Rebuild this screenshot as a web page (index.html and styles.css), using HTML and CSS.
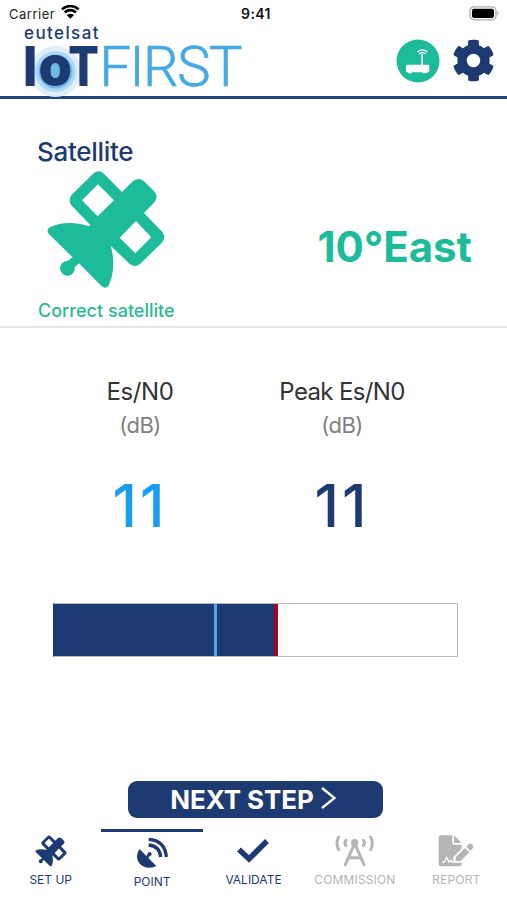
FILE: index.html
```html
<!DOCTYPE html>
<html lang="en">
<head>
<meta charset="utf-8">
<title>Eutelsat IoT First</title>
<link rel="stylesheet" href="styles.css">
</head>
<body>
<svg class="defs" width="0" height="0">
  <symbol id="satellite" viewBox="50 120 360 360">
    <path fill="currentColor" fill-rule="evenodd" d="M193 130Q207 118 222 130L278 186L309 155Q326 140 344 154L374 183Q388 198 376 216L344 249L399 306Q410 321 399 337L332 402Q317 414 301 402L244 347Q258 395 247 442L238 467Q228 478 217 469L149 400L136 412A22 22 0 1 1 115 393L130 382L58 311Q50 299 61 292Q113 268 179 289L183 285L126 226Q116 211 126 196ZM206 163L158 211L205 259L254 211ZM320 273L271 323L318 370L366 322Z"/>
  </symbol>
</svg>
<header class="header">
  <div class="status">
    <div class="carrier"><span>Carrier</span>
      <svg width="19" height="14" viewBox="186 16 57 42" fill="none" stroke="#000" stroke-width="8"><path d="M189 29Q214 9 239 29M197 38Q214 25 231 38"/><path d="M203 46Q214 38 225 46L214 57Z" fill="#000" stroke="none"/></svg>
    </div>
    <time>9:41</time>
    <svg class="battery" width="32" height="15" viewBox="0 0 32 15"><rect x="1" y=".8" width="26" height="13" rx="4" fill="#fff" stroke="#aaa" stroke-width="1.3"/><rect x="3" y="2.7" width="22" height="9.2" rx="2" fill="#000"/><path d="M28.5 5Q31 7.3 28.5 9.7Z" fill="#aaa"/></svg>
  </div>
  <div class="brand">
    <svg class="logo" width="250" height="70" viewBox="0 26 250 70">
      <circle cx="55.5" cy="71.5" r="25.5" fill="#e0eefa"/><circle cx="55.5" cy="71.5" r="20.5" fill="#b0d7f3"/><circle cx="55.5" cy="71.5" r="17" fill="#6fb9e9"/>
      <text class="logo-name" x="24" y="38.5" textLength="74.5">eutelsat</text>
      <text class="logo-iot" y="85.5" x="22.3" textLength="15.8" lengthAdjust="spacingAndGlyphs">I</text>
      <text class="logo-iot logo-o" y="85" x="39.3" textLength="32" lengthAdjust="spacingAndGlyphs">o</text>
      <text class="logo-iot" y="85.5" x="68.8" textLength="29.6" lengthAdjust="spacingAndGlyphs">T</text>
      <text class="logo-first" x="99.5" y="85.5" textLength="143">FIRST</text>
    </svg>
    <div class="actions">
      <svg width="44" height="44" viewBox="0 0 132 132"><circle cx="66" cy="66" r="64.5" fill="#1cbc9a"/><g fill="#fff"><rect x="30" y="77" width="70" height="23" rx="4"/><path d="M36 98h12v5H36zM80 98h12v5H80zM76 44h5v38h-5z"/></g><g stroke="#fff" fill="none" stroke-width="4"><path d="M64 39Q79 26 94 39M69 45Q79 36 89 45"/></g></svg>
      <svg width="43" height="43" viewBox="0 0 512 512"><path fill="#1d3b72" d="M487.4 315.7l-42.6-24.6c4.3-23.2 4.3-47 0-70.2l42.6-24.6c4.9-2.8 7.1-8.6 5.5-14-11.1-35.6-30-67.8-54.7-94.6-3.8-4.1-10-5.1-14.8-2.3L380.8 110c-17.9-15.4-38.5-27.3-60.8-35.1V25.8c0-5.6-3.9-10.5-9.4-11.7-36.7-8.2-74.3-7.8-109.2 0-5.5 1.2-9.4 6.1-9.4 11.7V75c-22.2 7.9-42.8 19.8-60.8 35.1L88.7 85.5c-4.9-2.8-11-1.9-14.8 2.3-24.7 26.7-43.6 58.9-54.7 94.6-1.7 5.4.6 11.2 5.5 14L67.3 221c-4.3 23.2-4.3 47 0 70.2l-42.6 24.6c-4.9 2.8-7.1 8.6-5.5 14 11.1 35.6 30 67.8 54.7 94.6 3.8 4.1 10 5.1 14.8 2.3l42.6-24.6c17.9 15.4 38.5 27.3 60.8 35.1v49.2c0 5.6 3.9 10.5 9.4 11.7 36.7 8.2 74.3 7.8 109.2 0 5.5-1.2 9.4-6.1 9.4-11.7v-49.2c22.2-7.9 42.8-19.8 60.8-35.1l42.6 24.6c4.9 2.8 11 1.9 14.8-2.3 24.7-26.7 43.6-58.9 54.7-94.6 1.5-5.5-.7-11.3-5.6-14.1zM256 336c-44.1 0-80-35.9-80-80s35.9-80 80-80 80 35.9 80 80-35.9 80-80 80z"/></svg>
    </div>
  </div>
</header>
<main>
  <section class="satellite">
    <div class="sat-info">
      <h1>Satellite</h1>
      <svg class="sat-icon" width="120" height="120"><use href="#satellite"/></svg>
      <p class="sat-state">Correct satellite</p>
    </div>
    <div class="sat-position">10°East</div>
  </section>
  <section class="readings">
    <div class="reading current"><h2>Es/N0</h2><p>(dB)</p><strong>11</strong></div>
    <div class="reading peak"><h2>Peak Es/N0</h2><p>(dB)</p><strong>11</strong></div>
  </section>
  <div class="meter"><i class="fill"></i><i class="threshold"></i><i class="fill rest"></i><i class="limit"></i></div>
  <button class="next"><span>NEXT STEP</span><svg width="15" height="22" viewBox="0 0 15 22" fill="none" stroke="#fff" stroke-width="2.3"><path d="M1 1L13.5 11L1 21"/></svg></button>
</main>
<nav class="tabs">
  <a class="tab"><svg width="32" height="32"><use href="#satellite"/></svg><span class="t-setup">SET UP</span></a>
  <a class="tab active"><svg width="32" height="32" viewBox="408 201 96 96"><path fill="currentColor" d="M417 239Q404 262 418 280Q436 300 465 290Q470 288 466 285L445 264L449 258A6 6 0 1 0 443 252L439 258L421 239Q419 237 417 239Z"/><g fill="none" stroke="currentColor" stroke-width="10"><path d="M446 208Q495 211 499 261M446 225Q479 228 482 261"/></g></svg><span class="t-point">POINT</span></a>
  <a class="tab"><svg width="32" height="32" viewBox="0 0 32 32" fill="none" stroke="currentColor" stroke-width="5.5"><path d="M2 14.5L12 24L30 6"/></svg><span class="t-validate">VALIDATE</span></a>
  <a class="tab disabled"><svg width="40" height="32" viewBox="256 194 120 96" fill="none" stroke="currentColor" stroke-width="9" stroke-linecap="round"><circle cx="315" cy="217" r="11" fill="currentColor" stroke="none"/><path d="M315 219L287 283M315 219L343 283M300 262H330"/><path d="M267 200Q257 218 267 238M363 200Q373 218 363 238"/><path d="M289 210Q282 218 289 226M341 210Q348 218 341 226"/></svg><span class="t-commission">COMMISSION</span></a>
  <a class="tab disabled"><svg width="36" height="32" viewBox="565 194 108 96"><path fill="currentColor" d="M573 195H608V217Q608 223 614 223H636V235L611 260V275H636V282Q636 288 629 288H573Q567 288 567 281V202Q567 195 573 195ZM613 195L636 218H613ZM618 261L646 233L659 246L632 273H618ZM650 229L657 221Q662 217 667 222L670 227Q672 231 668 235L662 242Z"/><path fill="none" stroke="#fff" stroke-width="4" d="M577 275Q584 278 587 269L591 261L598 276L603 270L607 275H635"/></svg><span class="t-report">REPORT</span></a>
</nav>
</body>
</html>
```
FILE: styles.css
```css
* { box-sizing: border-box; }
body { margin: 0; width: 507px; height: 900px; display: flex; flex-direction: column; background: #fff; color: #1d3b72; font-family: Inter, "Liberation Sans", sans-serif; overflow: hidden; }
h1, h2, p { margin: 0; font-weight: 400; }
svg { display: block; flex: none; }
.defs { position: absolute; }
.header { height: 99px; border-bottom: 3px solid #234579; }
.status { height: 26px; padding: 0 6px 0 9px; display: grid; grid-template-columns: 1fr auto 1fr; align-items: center; font-size: 13px; line-height: 16px; color: #222; }
.carrier { display: flex; gap: 6px; letter-spacing: .5px; padding-top: 1px; }
.carrier svg { margin-top: -1px; }
.status time { font-weight: 600; color: #111; font-size: 14px; letter-spacing: .4px; margin-right: -2px; padding-top: 1px; }
.battery { justify-self: end; }
.brand { display: flex; justify-content: space-between; }
.logo { overflow: visible; }
.logo text { fill: #1d3b72; }
.logo-name { font: 500 17px Inter, sans-serif; }
.logo-iot { font: 900 56px Roboto, sans-serif; }
.logo-o { stroke: #1d3b72; stroke-width: 1px; }
.logo .logo-first { font: 300 56px Roboto, sans-serif; fill: #45a9e3; stroke: #45a9e3; stroke-width: .7px; }
.actions { display: flex; gap: 12px; padding: 13px 12px 0 0; }
.satellite { height: 229px; border-bottom: 2px solid #e6e6e6; display: flex; justify-content: space-between; padding: 36px 35px 0 38px; }
h1 { font-size: 26px; line-height: 34px; font-weight: 500; letter-spacing: -.3px; margin-left: -1px; }
.sat-icon { color: #1cbc9a; margin: 1px 0 0 8px; }
.sat-state { font-size: 18px; line-height: 24px; margin-top: 9px; font-weight: 500; color: #2abb8e; letter-spacing: .02px; }
.sat-position { font-size: 42px; line-height: 50px; font-weight: 700; color: #1cbc9a; padding-top: 87px; }
.readings { display: grid; grid-template-columns: 202px 202px; justify-content: center; padding-top: 48px; margin-right: 25px; text-align: center; }
.reading h2 { font-size: 24px; line-height: 32px; color: #333; letter-spacing: -.35px; }
.peak h2 { letter-spacing: -.65px; }
.reading p { font-size: 22px; line-height: 28px; margin-top: 3px; color: #808080; letter-spacing: -.5px; }
.reading strong { display: block; font-size: 59px; line-height: 72px; margin-top: 31px; font-weight: 500; letter-spacing: 3px; }
.current strong { color: #189df2; }
.meter { height: 54px; width: 405px; margin: 61px 0 0 53px; border: 1px solid #bbb; border-left-color: #1d3b72; display: flex; }
.fill { width: 160px; background: #1d3b72; }
.rest { width: 57px; }
.threshold { width: 3px; background: #4badde; }
.limit { width: 4px; background: #a20622; }
.next { width: 255px; height: 37px; margin: 124px 0 0 128px; padding: 0 5px 0 0; border: 0; border-radius: 9px; background: #1d3b72; color: #fff; display: flex; align-items: center; justify-content: center; gap: 7px; font: 700 26px Inter, sans-serif; letter-spacing: -.1px; }
.next svg { margin-top: -3px; }
.tabs { display: grid; grid-template-columns: repeat(5, 1fr); margin-top: 11px; height: 71px; }
.tab { display: flex; flex-direction: column; align-items: center; padding-top: 6px; font-size: 12px; line-height: 16px; gap: 5px; }
.active { border-top: 3px solid #1d3b72; padding-top: 5px; }
.t-commission { letter-spacing: .15px; }
.t-report { letter-spacing: .2px; }
.disabled { color: #b5b5b5; }
```
